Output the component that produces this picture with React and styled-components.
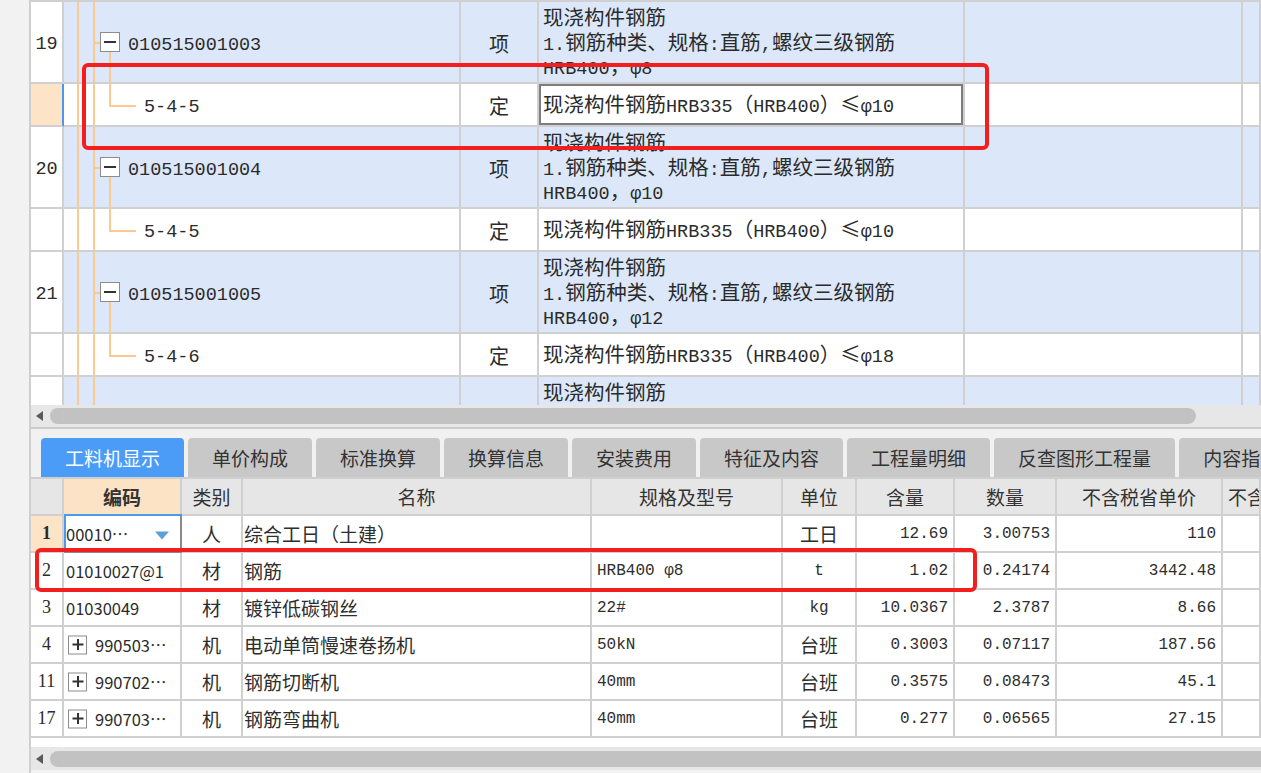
import React from 'react'
import styled, { createGlobalStyle, css } from 'styled-components'

const GlobalStyle = createGlobalStyle`
  html, body {
    margin: 0;
    padding: 0;
    background: #f2f2f2;
    overflow: hidden;
  }
  body {
    font-family: "Noto Sans CJK SC", "Noto Sans", sans-serif;
    color: #2b2b2b;
  }
`

const GRID = '#d0d0d0'
const ROW_BLUE = '#dce8fa'
const PICKED = '#fde4c6'
const GUIDE = '#fcc98f'

const Page = styled.div`
  position: relative;
  display: flex;
  width: 1261px;
  height: 773px;
  overflow: hidden;
  background: #f2f2f2;
`

const SideGutter = styled.div`
  flex: none;
  width: 29px;
  background: #f2f2f2;
`

const Workspace = styled.div`
  flex: 1;
  min-width: 0;
  display: flex;
  flex-direction: column;
  border-left: 2px solid #cfcfcf;
`

/* ---------- top tree grid ---------- */

const TreeViewport = styled.div`
  height: 405px;
  flex: none;
  overflow: hidden;
  background: #fff;
`

const TreeRow = styled.div`
  display: grid;
  grid-template-columns: 33px 397px 78px 426px 278px 1fr;
  height: ${p => p.$h}px;
`

const Cell = styled.div`
  box-sizing: border-box;
  position: relative;
  min-width: 0;
  overflow: hidden;
  white-space: nowrap;
  display: flex;
  align-items: center;
  border-right: 2px solid ${GRID};
  border-bottom: 2px solid ${GRID};
  background: ${p => p.$bg || '#fff'};
  justify-content: ${p => p.$align === 'center' ? 'center' : p.$align === 'right' ? 'flex-end' : 'flex-start'};
  padding: 0 5px;
`

const NumCell = styled(Cell)`
  justify-content: center;
  padding: 4px 0 0;
  font-family: "Liberation Mono", monospace;
  font-size: 18.5px;
  ${p => p.$active && css`border-right-color: #4a98ee;`}
`

const TreeCell = styled(Cell)`
  padding: 6px 0 0 ${p => p.$indent}px;
  font-family: "Liberation Mono", monospace;
  font-size: 18.5px;
`

const TypeCell = styled(Cell)`
  justify-content: center;
  padding-top: 2px;
  font-size: 20px;
`

const DescCell = styled(Cell)`
  flex-direction: column;
  align-items: flex-start;
  justify-content: center;
  padding-left: 4px;
  padding-top: 2px;
  font-family: "Liberation Mono", monospace;
  font-size: 18.5px;
  ${p => p.$editing && css`box-shadow: inset 0 0 0 2px #7d7d7d;`}
`

const DescLine = styled.div`
  height: 24.5px;
  line-height: 24.5px;
  overflow: visible;
`

const Han = styled.span`
  font-family: "Noto Sans CJK SC", sans-serif;
  font-size: 20.5px;
  line-height: 1;
`

const Guide = styled.span`
  position: absolute;
  background: ${GUIDE};
  left: ${p => p.$x}px;
  ${p => p.$v ? css`
    width: 2px;
    top: ${p.$top || '0'};
    bottom: ${p.$bottom || '0'};
  ` : css`
    height: 2px;
    top: 50%;
    width: ${p.$w}px;
  `}
`

const FoldBox = styled.span`
  position: absolute;
  box-sizing: border-box;
  width: ${p => p.$size}px;
  height: ${p => p.$size}px;
  left: ${p => p.$x}px;
  top: 50%;
  transform: translateY(-50%);
  border: 1.5px solid #8c8c8c;
  background: #fff;

  &::before, &::after {
    content: '';
    position: absolute;
    background: #333;
    left: 50%;
    top: 50%;
    transform: translate(-50%, -50%);
  }
  &::before {
    width: ${p => p.$size - 8}px;
    height: 2px;
  }
  &::after {
    display: ${p => p.$plus ? 'block' : 'none'};
    width: 2px;
    height: ${p => p.$size - 8}px;
  }
`

/* ---------- scrollbars ---------- */

const HScroll = styled.div`
  flex: none;
  height: ${p => p.$h}px;
  display: flex;
  align-items: center;
  background: #e7e7e7;
  overflow: hidden;
`

const ScrollArrow = styled.span`
  flex: none;
  margin: 0 7px 0 5px;
  width: 0;
  height: 0;
  border-top: 5px solid transparent;
  border-bottom: 5px solid transparent;
  border-right: 7px solid #5a5a5a;
`

const Thumb = styled.span`
  flex: ${p => p.$w ? 'none' : '1'};
  width: ${p => p.$w ? `${p.$w}px` : 'auto'};
  margin-right: ${p => p.$w ? 0 : -20}px;
  height: 16px;
  border-radius: 8px;
  background: #c2c2c2;
`

const Rule = styled.div`
  flex: none;
  height: 2px;
  background: #cbcbcb;
`

/* ---------- tabs ---------- */

const TabBar = styled.div`
  flex: none;
  height: 48px;
  box-sizing: border-box;
  padding: 9px 0 0 10px;
  display: flex;
  align-items: flex-end;
  gap: 4px;
  overflow: hidden;
  background: #f1f1f1;
`

const Tab = styled.div`
  flex: none;
  height: 39px;
  padding: 0 24px;
  display: flex;
  align-items: center;
  font-size: 19px;
  border-radius: 4px 4px 0 0;
  white-space: nowrap;
  color: ${p => p.$active ? '#fff' : '#333'};
  background: ${p => p.$active ? '#4b9cf7' : '#c8c8c8'};
`

/* ---------- bottom resource grid ---------- */

const ResGrid = styled.div`
  flex: none;
  border-top: 2px solid #cfcfcf;
  background: #fff;
`

const ResRow = styled.div`
  display: grid;
  grid-template-columns: 33px 118px 61px 349px 191px 74px 98px 102px 166px 1fr;
  height: 37px;
`

const HeadCell = styled(Cell)`
  justify-content: ${p => p.$align === 'left' ? 'flex-start' : 'center'};
  font-size: 19px;
  color: #333;
  background: ${p => p.$accent ? '#fde3c5' : '#e6e6e6'};
  font-weight: ${p => p.$accent ? 700 : 400};
`

const ResCell = styled(Cell)`
  font-size: ${p => p.$mono ? '16px' : '19px'};
  font-family: ${p => p.$mono ? '"Liberation Mono", monospace' : '"Noto Sans CJK SC", sans-serif'};
  color: #2e2e2e;
  ${p => p.$tight && css`padding-left: 1px;`}
`

const ResNum = styled(Cell)`
  justify-content: center;
  padding: 0;
  font-family: "Liberation Serif", serif;
  font-size: 18px;
  ${p => p.$active && css`
    background: ${PICKED};
    font-weight: 700;
  `}
`

const CodeCell = styled(Cell)`
  padding-left: ${p => p.$fold ? 31 : 2}px;
  font-size: 16.5px;
  ${p => p.$focus && css`
    border-top: 2px solid #4a9be8;
    border-left: 2px solid #4a9be8;
    border-right-color: #8a8a8a;
    border-bottom-color: #8a8a8a;
    margin-top: -2px;
    padding-left: 0;
  `}
`

const DropArrow = styled.span`
  position: absolute;
  right: 11px;
  top: 50%;
  transform: translateY(-30%);
  width: 0;
  height: 0;
  border-left: 7px solid transparent;
  border-right: 7px solid transparent;
  border-top: 8px solid #5d9fd8;
`

const BlankStrip = styled.div`
  flex: none;
  height: 9px;
  background: #fff;
`

const Callout = styled.div`
  position: absolute;
  box-sizing: border-box;
  left: ${p => p.$x}px;
  top: ${p => p.$y}px;
  width: ${p => p.$w}px;
  height: ${p => p.$h}px;
  border: 4px solid #f31e1e;
  border-radius: 6px;
  pointer-events: none;
`

/* ---------- data ---------- */

const treeRows = [
  { kind: 'item', no: '19', code: '010515001003', type: '项', desc: ['现浇构件钢筋', '1.钢筋种类、规格:直筋,螺纹三级钢筋', 'HRB400，φ8'] },
  { kind: 'sub', code: '5-4-5', type: '定', desc: ['现浇构件钢筋HRB335（HRB400）≤φ10'], picked: true },
  { kind: 'item', no: '20', code: '010515001004', type: '项', desc: ['现浇构件钢筋', '1.钢筋种类、规格:直筋,螺纹三级钢筋', 'HRB400，φ10'] },
  { kind: 'sub', code: '5-4-5', type: '定', desc: ['现浇构件钢筋HRB335（HRB400）≤φ10'] },
  { kind: 'item', no: '21', code: '010515001005', type: '项', desc: ['现浇构件钢筋', '1.钢筋种类、规格:直筋,螺纹三级钢筋', 'HRB400，φ12'] },
  { kind: 'sub', code: '5-4-6', type: '定', desc: ['现浇构件钢筋HRB335（HRB400）≤φ18'] },
  { kind: 'item', no: '22', code: '010515001006', type: '项', desc: ['现浇构件钢筋', '1.钢筋种类、规格:直筋,螺纹三级钢筋', 'HRB400，φ14'] },
]

const tabs = ['工料机显示', '单价构成', '标准换算', '换算信息', '安装费用', '特征及内容', '工程量明细', '反查图形工程量', '内容指引']

const columns = ['编码', '类别', '名称', '规格及型号', '单位', '含量', '数量', '不含税省单价', '不含税市场价']

const resources = [
  { no: '1', code: '00010⋯', cat: '人', name: '综合工日（土建）', spec: '', unit: '工日', qty: '12.69', amount: '3.00753', price: '110', focus: true },
  { no: '2', code: '01010027@1', cat: '材', name: '钢筋', spec: 'HRB400 φ8', unit: 't', qty: '1.02', amount: '0.24174', price: '3442.48' },
  { no: '3', code: '01030049', cat: '材', name: '镀锌低碳钢丝', spec: '22#', unit: 'kg', qty: '10.0367', amount: '2.3787', price: '8.66' },
  { no: '4', code: '990503⋯', cat: '机', name: '电动单筒慢速卷扬机', spec: '50kN', unit: '台班', qty: '0.3003', amount: '0.07117', price: '187.56', fold: true },
  { no: '11', code: '990702⋯', cat: '机', name: '钢筋切断机', spec: '40mm', unit: '台班', qty: '0.3575', amount: '0.08473', price: '45.1', fold: true },
  { no: '17', code: '990703⋯', cat: '机', name: '钢筋弯曲机', spec: '40mm', unit: '台班', qty: '0.277', amount: '0.06565', price: '27.15', fold: true },
]

const HAN_RUN = /([\u2264\u3000-\u303f\u4e00-\u9fff\uff00-\uffef]+)/

function Mixed({ text }) {
  return text.split(HAN_RUN).map((part, i) =>
    HAN_RUN.test(part) ? <Han key={i}>{part}</Han> : <span key={i}>{part}</span>
  )
}

function TreeGuides({ kind }) {
  return (
    <>
      <Guide $v $x={13} />
      <Guide $v $x={29} />
      {kind === 'item' ? (
        <>
          <Guide $x={29} $w={8} />
          <Guide $v $x={45} $top="calc(50% + 10px)" />
          <FoldBox $x={36} $size={20} />
        </>
      ) : (
        <>
          <Guide $v $x={45} $bottom="50%" />
          <Guide $x={45} $w={27} />
        </>
      )}
    </>
  )
}

function TreeLine({ row }) {
  const bg = row.kind === 'item' ? ROW_BLUE : '#fff'
  return (
    <TreeRow $h={row.kind === 'item' ? 82 : 43}>
      <NumCell $bg={row.picked ? PICKED : '#fff'} $active={row.picked}>{row.no}</NumCell>
      <TreeCell $bg={bg} $indent={row.kind === 'item' ? 64 : 80}>
        <TreeGuides kind={row.kind} />
        {row.code}
      </TreeCell>
      <TypeCell $bg={bg}>{row.type}</TypeCell>
      <DescCell $bg={bg} $editing={row.picked}>
        {row.desc.map((line, i) => <DescLine key={i}><Mixed text={line} /></DescLine>)}
      </DescCell>
      <Cell $bg={bg} />
      <Cell $bg={bg} />
    </TreeRow>
  )
}

function ResourceLine({ r }) {
  return (
    <ResRow>
      <ResNum $active={r.focus}>{r.no}</ResNum>
      <CodeCell $fold={r.fold} $focus={r.focus}>
        {r.fold && <FoldBox $x={4} $size={19} $plus />}
        {r.code}
        {r.focus && <DropArrow />}
      </CodeCell>
      <ResCell $align="center">{r.cat}</ResCell>
      <ResCell $tight>{r.name}</ResCell>
      <ResCell $mono>{r.spec}</ResCell>
      <ResCell $align="center" $mono={r.unit.length === 1 || r.unit === 'kg'}>{r.unit}</ResCell>
      <ResCell $align="right" $mono>{r.qty}</ResCell>
      <ResCell $align="right" $mono>{r.amount}</ResCell>
      <ResCell $align="right" $mono>{r.price}</ResCell>
      <ResCell />
    </ResRow>
  )
}

export default function App() {
  return (
    <Page>
      <GlobalStyle />
      <SideGutter />
      <Workspace>
        <TreeViewport>
          <TreeRow $h={2}>
            <Cell /><Cell $bg={ROW_BLUE} /><Cell $bg={ROW_BLUE} /><Cell $bg={ROW_BLUE} /><Cell $bg={ROW_BLUE} /><Cell $bg={ROW_BLUE} />
          </TreeRow>
          {treeRows.map((row, i) => <TreeLine key={i} row={row} />)}
        </TreeViewport>
        <HScroll $h={22}>
          <ScrollArrow />
          <Thumb $w={1146} />
        </HScroll>
        <Rule />
        <TabBar>
          {tabs.map((t, i) => <Tab key={t} $active={i === 0}>{t}</Tab>)}
        </TabBar>
        <ResGrid>
          <ResRow>
            <HeadCell />
            {columns.map((c, i) => (
              <HeadCell key={c} $accent={i === 0} $align={i === columns.length - 1 ? 'left' : 'center'}>{c}</HeadCell>
            ))}
          </ResRow>
          {resources.map(r => <ResourceLine key={r.no} r={r} />)}
        </ResGrid>
        <BlankStrip />
        <HScroll $h={23}>
          <ScrollArrow />
          <Thumb />
        </HScroll>
      </Workspace>
      <Callout $x={82} $y={63} $w={907} $h={87} />
      <Callout $x={35} $y={548} $w={942} $h={44} />
    </Page>
  )
}
